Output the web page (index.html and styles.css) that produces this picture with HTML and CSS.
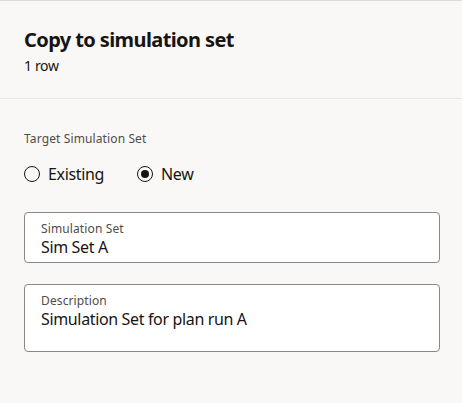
FILE: index.html
```html
<!DOCTYPE html>
<html>
<head>
<meta charset="utf-8">
<link rel="stylesheet" href="styles.css">
</head>
<body>
<div class="dialog">
  <header class="header">
    <h1 class="title">Copy to simulation set</h1>
    <div class="subtitle">1 row</div>
  </header>
  <section class="body">
    <div class="group-label">Target Simulation Set</div>
    <div class="radios">
      <label class="radio"><span class="circle"></span><span class="radio-text">Existing</span></label>
      <label class="radio"><span class="circle checked"></span><span class="radio-text">New</span></label>
    </div>
    <div class="field">
      <div class="field-label">Simulation Set</div>
      <div class="field-value">Sim Set A</div>
    </div>
    <div class="field field-area">
      <div class="field-label">Description</div>
      <div class="field-value">Simulation Set for plan run A</div>
    </div>
  </section>
</div>
</body>
</html>
```
FILE: styles.css
```css
html, body {
  margin: 0;
  padding: 0;
}
body {
  background: #f9f8f6;
  font-family: "Noto Sans", "Open Sans", sans-serif;
  color: #161513;
  width: 462px;
  height: 403px;
  overflow: hidden;
  letter-spacing: -0.022em;
}
.dialog {
  border-top: 1px solid #dcdcdc;
}
.header {
  padding: 26px 24px 0;
  height: 71px;
  border-bottom: 1px solid #e9e8e6;
}
.title {
  margin: 0;
  font-size: 20px;
  line-height: 26px;
  font-weight: 700;
  letter-spacing: -0.03em;
}
.subtitle {
  font-size: 14px;
  line-height: 18px;
  margin-top: 4px;
}
.body {
  padding: 32px 22px 0 24px;
}
.group-label {
  font-size: 12px;
  line-height: 16px;
  color: #4f4d4a;
  letter-spacing: 0.01em;
}
.radios {
  display: flex;
  gap: 33px;
  margin-top: 15px;
  height: 24px;
  align-items: center;
}
.radio {
  display: flex;
  align-items: center;
  gap: 8px;
  font-size: 16px;
}
.circle {
  width: 16px;
  height: 16px;
  box-sizing: border-box;
  border: 1.5px solid #161513;
  border-radius: 50%;
  display: flex;
  align-items: center;
  justify-content: center;
}
.circle.checked::after {
  content: "";
  width: 8px;
  height: 8px;
  border-radius: 50%;
  background: #161513;
}
.field {
  margin-top: 26px;
  background: #fff;
  border: 1px solid #8a8885;
  border-radius: 4px;
  height: 51px;
  box-sizing: border-box;
  padding: 8px 16px 0;
}
.field-area {
  margin-top: 21px;
  height: 68px;
}
.field-label {
  font-size: 12px;
  line-height: 16px;
  color: #4f4d4a;
  letter-spacing: 0.01em;
}
.field-value {
  font-size: 16px;
  line-height: 20px;
}
```
